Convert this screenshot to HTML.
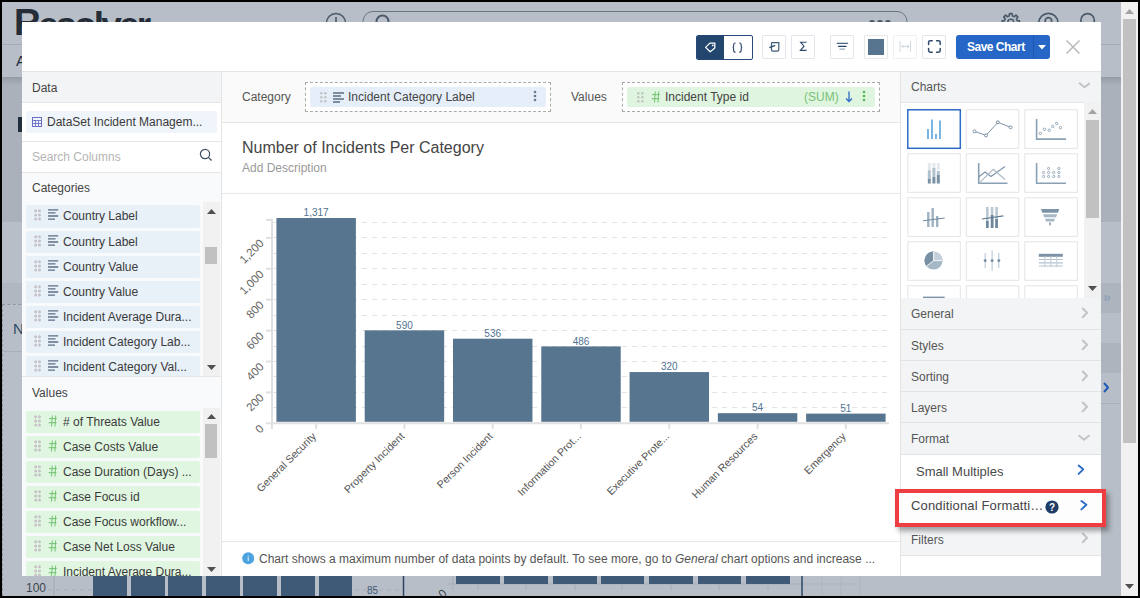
<!DOCTYPE html>
<html><head><meta charset="utf-8">
<style>
*{box-sizing:border-box;margin:0;padding:0}
html,body{width:1140px;height:598px;overflow:hidden;background:#000;font-family:"Liberation Sans",sans-serif}
.abs{position:absolute}
#page{position:absolute;left:2px;top:2px;width:1136px;height:594px;background:#b8bec7;overflow:hidden}
#modal{position:absolute;left:22px;top:22px;width:1079px;height:554px;background:#fff;overflow:hidden}
.t{position:absolute;white-space:nowrap;line-height:1}
.btn{position:absolute;top:13px;width:24px;height:24px;border:1px solid #e3e7ed;border-radius:1px;background:#fff}
.row{position:absolute;left:4px;width:174px;height:22px;border-radius:2px}
.cat{background:#e8f0f8}
.val{background:#e0f6e0}
.row .dots{position:absolute;left:7.9px;top:4.2px}
.row .ic{position:absolute;left:22px;top:4.3px}
.row .hash{position:absolute;left:22px;top:3.8px}
.row .tx{position:absolute;left:37px;top:5px;font-size:12px;color:#3a3a3a;white-space:nowrap;line-height:12px}
.tile{position:absolute;width:54px;height:40px;border:1px solid #e6e6e6;background:#fff}
.acc{position:absolute;left:0;width:200px;height:31px;background:#f3f4f6;border-bottom:1px solid #e3e3e3}
.acc .tx{position:absolute;left:10px;top:10px;font-size:12px;color:#555;line-height:12px}
.acc svg{position:absolute;left:179px;top:10px}
</style></head>
<body>
<div id="page">
  <!-- bands (page coords minus 2) -->
  <div class="abs" style="left:0;top:42px;width:1119px;height:1px;background:#a3aab3"></div>
  <div class="abs" style="left:0;top:75px;width:1119px;height:145px;background:#aab1ba"></div>
  <div class="abs" style="left:0;top:75px;width:1119px;height:8px;background:linear-gradient(#959ca5,#aab1ba)"></div>
  <div class="abs" style="left:0;top:281px;width:1119px;height:1px;background:#a8afb8"></div>
  <div class="abs" style="left:0;top:281px;width:30px;height:21px;background:#b0b7c0"></div>
  <div class="abs" style="left:0;top:302px;width:30px;height:0;border-top:1px dashed #8f969f"></div>
  <div class="abs" style="left:0px;top:302px;width:0;height:292px;border-left:1px dashed #8f969f"></div>
  <div class="abs" style="left:0;top:349px;width:30px;height:1px;background:#a8afb8"></div>
  <div class="abs" style="left:1099px;top:281px;width:20px;height:30px;background:#adb4bd"></div>
  <div class="abs" style="left:1099px;top:341px;width:20px;height:30px;background:#adb4bd"></div>
  <div class="abs" style="left:1099px;top:401px;width:20px;height:1px;background:#a8afb8"></div>
  <div class="t" style="left:1101px;top:288px;font-size:14px;color:#8fa3b8;font-weight:bold">&raquo;</div>
  <svg class="abs" style="left:1101px;top:380px" width="6" height="11"><path d="M1 1 L5 5.5 L1 10" fill="none" stroke="#1f5bb5" stroke-width="2"/></svg>
  <div class="t" style="left:14px;top:51px;font-size:15px;color:#1f2d3d">A</div>
  <div class="abs" style="left:16px;top:115px;width:4px;height:15px;background:#1f2d3d"></div>
  <div class="t" style="left:11px;top:319px;font-size:15px;color:#2a4a68">N</div>
  <div class="t" style="left:12px;top:2px;font-size:37px;font-weight:bold;color:#252d38;letter-spacing:-2.4px">R<span style="position:relative;top:3px;letter-spacing:-2.8px">esolver</span></div>
  <svg class="abs" style="left:0;top:0" width="1119" height="30"><g transform="translate(-2,-2)" fill="none" stroke="#4b5a6b">
    <circle cx="336" cy="23" r="9.5" stroke-width="1.6"/><path d="M336 17 V22" stroke-width="1.6"/>
    <path d="M363 24 V21 A10 10 0 0 1 373 11.5 H897 A10 10 0 0 1 907 21 V24" stroke-width="1" stroke="#6a7684"/>
    <circle cx="382.5" cy="21.5" r="6" stroke-width="2"/>
    <g fill="#4b5a6b" stroke="none"><ellipse cx="872" cy="21.5" rx="2.6" ry="1.4"/><ellipse cx="880" cy="21.5" rx="2.6" ry="1.4"/><ellipse cx="888" cy="21.5" rx="2.6" ry="1.4"/></g>
    <path d="M1009.42 13.61 L1012.18 13.61 L1012.34 15.88 L1014.25 16.67 L1015.97 15.18 L1017.92 17.13 L1016.43 18.85 L1017.22 20.76 L1019.49 20.92 L1019.49 23.68 L1017.22 23.84 L1016.43 25.75 L1017.92 27.47 L1015.97 29.42 L1014.25 27.93 L1012.34 28.72 L1012.18 30.99 L1009.42 30.99 L1009.26 28.72 L1007.35 27.93 L1005.63 29.42 L1003.68 27.47 L1005.17 25.75 L1004.38 23.84 L1002.11 23.68 L1002.11 20.92 L1004.38 20.76 L1005.17 18.85 L1003.68 17.13 L1005.63 15.18 L1007.35 16.67 L1009.26 15.88 Z" stroke-width="1.6" stroke-linejoin="round"/><circle cx="1010.8" cy="22.3" r="3" stroke-width="1.5"/>
    <circle cx="1048.4" cy="23" r="9.6" stroke-width="1.7"/><circle cx="1048.4" cy="21" r="3.3" stroke-width="1.7"/>
    <circle cx="1087.6" cy="20.5" r="6.8" stroke-width="1.7"/>
  </g></svg>
  <!-- bottom strip -->
  <svg class="abs" style="left:0;top:570px" width="1119" height="24"><g transform="translate(-2,-572)">
    <text x="26" y="592" font-size="12" fill="#3d4650" font-family="Liberation Sans">100</text>
    <path d="M54 572 V596" stroke="#a3aab3" stroke-width="1"/>
    <path d="M48 590 H92" stroke="#a6adb6" stroke-dasharray="4,4"/>
    <g fill="#3e5a76"><rect x="93" y="572" width="34" height="24"/><rect x="131" y="572" width="34" height="24"/><rect x="168" y="572" width="34" height="24"/><rect x="206" y="572" width="34" height="24"/><rect x="243" y="572" width="34" height="24"/><rect x="281" y="572" width="34" height="24"/><rect x="319" y="572" width="33" height="24"/></g>
    <path d="M355 590 H405" stroke="#a6adb6" stroke-dasharray="4,4"/>
    <text x="367" y="594" font-size="10" fill="#3e5a76" font-family="Liberation Sans">85</text>
    <path d="M403.5 572 V596" stroke="#2d4560" stroke-width="1.5"/>
    <text transform="translate(447.5,594) rotate(-45)" text-anchor="end" font-size="11.5" fill="#3d4650" font-family="Liberation Sans">0</text>
    <path d="M448 584 H802 M453 576 V590" stroke="#a6adb6" stroke-width="1"/>
    <g fill="#3e5a76"><rect x="456" y="572" width="44" height="12"/><rect x="504" y="572" width="44" height="12"/><rect x="553" y="572" width="44" height="12"/><rect x="601" y="572" width="43" height="12"/><rect x="649" y="572" width="44" height="12"/><rect x="698" y="572" width="43" height="12"/><rect x="746" y="572" width="44" height="12"/></g>
    <path d="M478 584 V590 M526 584 V590 M575 584 V590 M622 584 V590 M671 584 V590 M719 584 V590 M768 584 V590" stroke="#a6adb6"/>
    <path d="M802 572 V596" stroke="#2d4560" stroke-width="1.5"/>
    <path d="M803 584 H860 M822 572 V596 M841 572 V596 M860 572 V596" stroke="#aeb5be" stroke-width="1"/>
  </g></svg>
  <!-- scrollbar -->
  <div class="abs" style="left:1119px;top:0;width:17px;height:594px;background:#f1f1f1"></div>
  <svg class="abs" style="left:1123px;top:7px" width="9" height="5"><path d="M0 5 L4.5 0 L9 5 Z" fill="#a3a3a3"/></svg>
  <div class="abs" style="left:1121px;top:17px;width:13px;height:424px;background:#c1c1c1"></div>
  <svg class="abs" style="left:1123px;top:582px" width="9" height="5"><path d="M0 0 L4.5 5 L9 0 Z" fill="#505050"/></svg>
</div>
<div id="modal">
  <!-- header -->
  <div class="abs" style="left:0;top:0;width:1079px;height:49px;background:#fff"></div>
  <div class="abs" style="left:674px;top:13px;width:57px;height:25px;border:1px solid #26497a;border-radius:2px;overflow:hidden;background:#fff">
    <div class="abs" style="left:0;top:0;width:27px;height:23px;background:#23466f"></div>
  </div>
  <div class="btn" style="left:740px"></div>
  <div class="btn" style="left:769px"></div>
  <div class="btn" style="left:808px"></div>
  <div class="btn" style="left:842px;border-color:#e8e8e8"><div class="abs" style="left:3px;top:3px;width:16px;height:16px;background:#587590"></div></div>
  <div class="btn" style="left:871px;border-color:#eef0f3"></div>
  <div class="btn" style="left:900px"></div>
  <svg class="abs" style="left:0;top:0" width="1079" height="49"><g transform="translate(-22,-22)" fill="none">
    <path d="M705.6 47.4 L709.9 43.1 H714.8 V48.1 L710.2 51.8 Z" stroke="#fff" stroke-width="1.3" stroke-linejoin="round"/>
    <rect x="711.9" y="44.6" width="1.6" height="1.6" fill="#fff"/>
    <path d="M735.6 43 Q733.6 43 733.6 45 V46.6 Q733.6 47.5 732.6 47.5 Q733.6 47.5 733.6 48.4 V50.2 Q733.6 52.2 735.6 52.2" stroke="#2d4a6a" stroke-width="1.1"/>
    <path d="M739.2 43 Q741.2 43 741.2 45 V46.6 Q741.2 47.5 742.2 47.5 Q741.2 47.5 741.2 48.4 V50.2 Q741.2 52.2 739.2 52.2" stroke="#2d4a6a" stroke-width="1.1"/>
    <path d="M771.5 42.6 H778.8 V49.6 Q778.8 51.2 777.2 51.2 H773 Q771.5 51.2 771.5 49.6 V42.6" stroke="#3d5a78" stroke-width="1.2"/>
    <path d="M769.4 47.6 L775.2 45.4" stroke="#2d4a6a" stroke-width="1.3"/>
    <path d="M806.5 42.2 H800.6 L804 46.2 L800.4 50.4 H806.6" stroke="#2d4a6a" stroke-width="1.1" stroke-linejoin="miter"/>
    <path d="M837.2 43.4 H847.6" stroke="#4a6584" stroke-width="1.3" stroke-linecap="round"/>
    <path d="M838.6 46.4 H846" stroke="#23446a" stroke-width="1.3" stroke-linecap="round"/>
    <path d="M840 49.2 H844.5" stroke="#9aabbb" stroke-width="1.3" stroke-linecap="round"/>
    <path d="M900 41 V51.7 M910.5 41 V51.7" stroke="#d3dae3" stroke-width="1.1"/>
    <path d="M901.8 46.4 H909 M903.4 45 L901.8 46.4 L903.4 47.8 M907.4 45 L909 46.4 L907.4 47.8" stroke="#c3ccd6" stroke-width="0.9"/>
    <path d="M928.6 44.6 V42.4 Q928.6 40.8 930.2 40.8 H932.2 M936.6 40.8 H938.6 Q940.2 40.8 940.2 42.4 V44.6 M940.2 48.6 V50.6 Q940.2 52.2 938.6 52.2 H936.6 M932.2 52.2 H930.2 Q928.6 52.2 928.6 50.6 V48.6" stroke="#2d4a6a" stroke-width="1.5" stroke-linecap="round"/>
  </g></svg>
  <div class="abs" style="left:934px;top:13px;width:94px;height:24px;background:#2566c7;border-radius:3px">
    <div class="t" style="left:11px;top:6px;font-size:12px;font-weight:bold;color:#fff;letter-spacing:-0.5px">Save Chart</div>
    <div class="abs" style="left:77px;top:0;width:1px;height:24px;background:#1f58ae"></div>
    <svg class="abs" style="left:82px;top:10px" width="8" height="5" viewBox="0 0 8 5"><path d="M0 0 H8 L4 4.5 Z" fill="#fff"/></svg>
  </div>
  <svg class="abs" style="left:1044px;top:18px" width="14" height="14" viewBox="0 0 14 14"><path d="M0.5 0.5 L13.5 13.5 M13.5 0.5 L0.5 13.5" stroke="#b9b9b9" stroke-width="1.5"/></svg>

  <!-- left panel -->
  <div class="abs" style="left:0;top:49px;width:200px;height:505px;border-right:1px solid #e3e3e3;background:#fff">
    <div class="abs" style="left:0;top:1px;width:199px;height:31px;background:#f3f4f6;border-bottom:1px solid #e6e6e6"></div>
    <div class="t" style="left:10px;top:10.5px;font-size:12px;color:#444">Data</div>
    <div class="abs" style="left:4px;top:40px;width:191px;height:22px;background:#eff5fb;border-radius:2px"></div>
    <svg class="abs" style="left:10px;top:46px" width="10" height="10" viewBox="0 0 10 10"><rect x="0.5" y="0.5" width="9" height="9" fill="none" stroke="#6b6fc9" stroke-width="1"/><path d="M0.5 3.5 H9.5 M0.5 6.5 H9.5 M3.5 3.5 V9.5 M6.5 3.5 V9.5" stroke="#6b6fc9" stroke-width="0.9"/></svg>
    <div class="t" style="left:25px;top:45px;font-size:12px;color:#3a3a3a">DataSet Incident Managem...</div>
    <div class="abs" style="left:0;top:70px;width:199px;height:1px;background:#e6e6e6"></div>
    <div class="t" style="left:10px;top:80px;font-size:12px;color:#b5b5b5">Search Columns</div>
    <svg class="abs" style="left:177px;top:77px" width="14" height="14" viewBox="0 0 14 14"><circle cx="6" cy="6" r="4.6" fill="none" stroke="#3d4f63" stroke-width="1.2"/><path d="M9.4 9.4 L12.5 12.5" stroke="#3d4f63" stroke-width="1.3"/></svg>
    <div class="abs" style="left:0;top:101px;width:199px;height:1px;background:#e6e6e6"></div>
    <div class="abs" style="left:0;top:102px;width:199px;height:203px;background:#f9fafc"></div>
    <div class="t" style="left:10px;top:111px;font-size:12px;color:#444">Categories</div>
    <div id="catlist" class="abs" style="left:0;top:131px;width:199px;height:174px;overflow:hidden">
      <div class="row cat" style="top:3px;height:23px"><svg class="dots" width="8" height="12"><g fill="#c6c2c8"><circle cx="1.7" cy="1.7" r="1.5"/><circle cx="5.5" cy="1.7" r="1.5"/><circle cx="1.7" cy="5.9" r="1.5"/><circle cx="5.5" cy="5.9" r="1.5"/><circle cx="1.7" cy="10.1" r="1.5"/><circle cx="5.5" cy="10.1" r="1.5"/></g></svg><svg class="ic" width="11" height="11"><path d="M0 0.8 H10.2 M0 3.9 H7.5 M0 7 H10.2 M0 10.1 H7" stroke="#5c6f84" stroke-width="1.3"/></svg><div class="tx">Country Label</div></div>
      <div class="row cat" style="top:29px"><svg class="dots" width="8" height="12"><g fill="#c6c2c8"><circle cx="1.7" cy="1.7" r="1.5"/><circle cx="5.5" cy="1.7" r="1.5"/><circle cx="1.7" cy="5.9" r="1.5"/><circle cx="5.5" cy="5.9" r="1.5"/><circle cx="1.7" cy="10.1" r="1.5"/><circle cx="5.5" cy="10.1" r="1.5"/></g></svg><svg class="ic" width="11" height="11"><path d="M0 0.8 H10.2 M0 3.9 H7.5 M0 7 H10.2 M0 10.1 H7" stroke="#5c6f84" stroke-width="1.3"/></svg><div class="tx">Country Label</div></div>
      <div class="row cat" style="top:54px"><svg class="dots" width="8" height="12"><g fill="#c6c2c8"><circle cx="1.7" cy="1.7" r="1.5"/><circle cx="5.5" cy="1.7" r="1.5"/><circle cx="1.7" cy="5.9" r="1.5"/><circle cx="5.5" cy="5.9" r="1.5"/><circle cx="1.7" cy="10.1" r="1.5"/><circle cx="5.5" cy="10.1" r="1.5"/></g></svg><svg class="ic" width="11" height="11"><path d="M0 0.8 H10.2 M0 3.9 H7.5 M0 7 H10.2 M0 10.1 H7" stroke="#5c6f84" stroke-width="1.3"/></svg><div class="tx">Country Value</div></div>
      <div class="row cat" style="top:79px"><svg class="dots" width="8" height="12"><g fill="#c6c2c8"><circle cx="1.7" cy="1.7" r="1.5"/><circle cx="5.5" cy="1.7" r="1.5"/><circle cx="1.7" cy="5.9" r="1.5"/><circle cx="5.5" cy="5.9" r="1.5"/><circle cx="1.7" cy="10.1" r="1.5"/><circle cx="5.5" cy="10.1" r="1.5"/></g></svg><svg class="ic" width="11" height="11"><path d="M0 0.8 H10.2 M0 3.9 H7.5 M0 7 H10.2 M0 10.1 H7" stroke="#5c6f84" stroke-width="1.3"/></svg><div class="tx">Country Value</div></div>
      <div class="row cat" style="top:104px"><svg class="dots" width="8" height="12"><g fill="#c6c2c8"><circle cx="1.7" cy="1.7" r="1.5"/><circle cx="5.5" cy="1.7" r="1.5"/><circle cx="1.7" cy="5.9" r="1.5"/><circle cx="5.5" cy="5.9" r="1.5"/><circle cx="1.7" cy="10.1" r="1.5"/><circle cx="5.5" cy="10.1" r="1.5"/></g></svg><svg class="ic" width="11" height="11"><path d="M0 0.8 H10.2 M0 3.9 H7.5 M0 7 H10.2 M0 10.1 H7" stroke="#5c6f84" stroke-width="1.3"/></svg><div class="tx">Incident Average Dura...</div></div>
      <div class="row cat" style="top:129px"><svg class="dots" width="8" height="12"><g fill="#c6c2c8"><circle cx="1.7" cy="1.7" r="1.5"/><circle cx="5.5" cy="1.7" r="1.5"/><circle cx="1.7" cy="5.9" r="1.5"/><circle cx="5.5" cy="5.9" r="1.5"/><circle cx="1.7" cy="10.1" r="1.5"/><circle cx="5.5" cy="10.1" r="1.5"/></g></svg><svg class="ic" width="11" height="11"><path d="M0 0.8 H10.2 M0 3.9 H7.5 M0 7 H10.2 M0 10.1 H7" stroke="#5c6f84" stroke-width="1.3"/></svg><div class="tx">Incident Category Lab...</div></div>
      <div class="row cat" style="top:154px"><svg class="dots" width="8" height="12"><g fill="#c6c2c8"><circle cx="1.7" cy="1.7" r="1.5"/><circle cx="5.5" cy="1.7" r="1.5"/><circle cx="1.7" cy="5.9" r="1.5"/><circle cx="5.5" cy="5.9" r="1.5"/><circle cx="1.7" cy="10.1" r="1.5"/><circle cx="5.5" cy="10.1" r="1.5"/></g></svg><svg class="ic" width="11" height="11"><path d="M0 0.8 H10.2 M0 3.9 H7.5 M0 7 H10.2 M0 10.1 H7" stroke="#5c6f84" stroke-width="1.3"/></svg><div class="tx">Incident Category Val...</div></div>
      <!-- scrollbar -->
      <div class="abs" style="left:181px;top:0;width:17px;height:174px;background:#f1f1f1"></div>
      <svg class="abs" style="left:185px;top:7px" width="9" height="5"><path d="M0 5 L4.5 0 L9 5 Z" fill="#505050"/></svg>
      <div class="abs" style="left:183px;top:44.5px;width:12px;height:17px;background:#c1c1c1"></div>
      <svg class="abs" style="left:185px;top:163px" width="9" height="5"><path d="M0 0 L4.5 5 L9 0 Z" fill="#505050"/></svg>
    </div>
    <div class="abs" style="left:0;top:305px;width:199px;height:1px;background:#e6e6e6"></div>
    <div class="abs" style="left:0;top:306px;width:199px;height:199px;background:#f9fafc"></div>
    <div class="t" style="left:10px;top:316px;font-size:12px;color:#444">Values</div>
    <div id="vallist" class="abs" style="left:0;top:337px;width:199px;height:168px;overflow:hidden">
      <div class="row val" style="top:3px"><svg class="dots" width="8" height="12"><g fill="#c6c2c8"><circle cx="1.7" cy="1.7" r="1.5"/><circle cx="5.5" cy="1.7" r="1.5"/><circle cx="1.7" cy="5.9" r="1.5"/><circle cx="5.5" cy="5.9" r="1.5"/><circle cx="1.7" cy="10.1" r="1.5"/><circle cx="5.5" cy="10.1" r="1.5"/></g></svg><svg class="hash" width="9" height="12"><path d="M3.5 11.5 L4.3 0.5 M6.9 11.5 L7.7 0.5 M1 3.6 H8.8 M0.6 7.7 H8.4" stroke="#6cc06c" stroke-width="0.95"/></svg><div class="tx"># of Threats Value</div></div>
      <div class="row val" style="top:28px"><svg class="dots" width="8" height="12"><g fill="#c6c2c8"><circle cx="1.7" cy="1.7" r="1.5"/><circle cx="5.5" cy="1.7" r="1.5"/><circle cx="1.7" cy="5.9" r="1.5"/><circle cx="5.5" cy="5.9" r="1.5"/><circle cx="1.7" cy="10.1" r="1.5"/><circle cx="5.5" cy="10.1" r="1.5"/></g></svg><svg class="hash" width="9" height="12"><path d="M3.5 11.5 L4.3 0.5 M6.9 11.5 L7.7 0.5 M1 3.6 H8.8 M0.6 7.7 H8.4" stroke="#6cc06c" stroke-width="0.95"/></svg><div class="tx">Case Costs Value</div></div>
      <div class="row val" style="top:53px"><svg class="dots" width="8" height="12"><g fill="#c6c2c8"><circle cx="1.7" cy="1.7" r="1.5"/><circle cx="5.5" cy="1.7" r="1.5"/><circle cx="1.7" cy="5.9" r="1.5"/><circle cx="5.5" cy="5.9" r="1.5"/><circle cx="1.7" cy="10.1" r="1.5"/><circle cx="5.5" cy="10.1" r="1.5"/></g></svg><svg class="hash" width="9" height="12"><path d="M3.5 11.5 L4.3 0.5 M6.9 11.5 L7.7 0.5 M1 3.6 H8.8 M0.6 7.7 H8.4" stroke="#6cc06c" stroke-width="0.95"/></svg><div class="tx">Case Duration (Days) ...</div></div>
      <div class="row val" style="top:78px"><svg class="dots" width="8" height="12"><g fill="#c6c2c8"><circle cx="1.7" cy="1.7" r="1.5"/><circle cx="5.5" cy="1.7" r="1.5"/><circle cx="1.7" cy="5.9" r="1.5"/><circle cx="5.5" cy="5.9" r="1.5"/><circle cx="1.7" cy="10.1" r="1.5"/><circle cx="5.5" cy="10.1" r="1.5"/></g></svg><svg class="hash" width="9" height="12"><path d="M3.5 11.5 L4.3 0.5 M6.9 11.5 L7.7 0.5 M1 3.6 H8.8 M0.6 7.7 H8.4" stroke="#6cc06c" stroke-width="0.95"/></svg><div class="tx">Case Focus id</div></div>
      <div class="row val" style="top:103px"><svg class="dots" width="8" height="12"><g fill="#c6c2c8"><circle cx="1.7" cy="1.7" r="1.5"/><circle cx="5.5" cy="1.7" r="1.5"/><circle cx="1.7" cy="5.9" r="1.5"/><circle cx="5.5" cy="5.9" r="1.5"/><circle cx="1.7" cy="10.1" r="1.5"/><circle cx="5.5" cy="10.1" r="1.5"/></g></svg><svg class="hash" width="9" height="12"><path d="M3.5 11.5 L4.3 0.5 M6.9 11.5 L7.7 0.5 M1 3.6 H8.8 M0.6 7.7 H8.4" stroke="#6cc06c" stroke-width="0.95"/></svg><div class="tx">Case Focus workflow...</div></div>
      <div class="row val" style="top:128px"><svg class="dots" width="8" height="12"><g fill="#c6c2c8"><circle cx="1.7" cy="1.7" r="1.5"/><circle cx="5.5" cy="1.7" r="1.5"/><circle cx="1.7" cy="5.9" r="1.5"/><circle cx="5.5" cy="5.9" r="1.5"/><circle cx="1.7" cy="10.1" r="1.5"/><circle cx="5.5" cy="10.1" r="1.5"/></g></svg><svg class="hash" width="9" height="12"><path d="M3.5 11.5 L4.3 0.5 M6.9 11.5 L7.7 0.5 M1 3.6 H8.8 M0.6 7.7 H8.4" stroke="#6cc06c" stroke-width="0.95"/></svg><div class="tx">Case Net Loss Value</div></div>
      <div class="row val" style="top:153px"><svg class="dots" width="8" height="12"><g fill="#c6c2c8"><circle cx="1.7" cy="1.7" r="1.5"/><circle cx="5.5" cy="1.7" r="1.5"/><circle cx="1.7" cy="5.9" r="1.5"/><circle cx="5.5" cy="5.9" r="1.5"/><circle cx="1.7" cy="10.1" r="1.5"/><circle cx="5.5" cy="10.1" r="1.5"/></g></svg><svg class="hash" width="9" height="12"><path d="M3.5 11.5 L4.3 0.5 M6.9 11.5 L7.7 0.5 M1 3.6 H8.8 M0.6 7.7 H8.4" stroke="#6cc06c" stroke-width="0.95"/></svg><div class="tx">Incident Average Dura...</div></div>
      <div class="abs" style="left:181px;top:0;width:17px;height:168px;background:#f1f1f1"></div>
      <svg class="abs" style="left:185px;top:6px" width="9" height="5"><path d="M0 5 L4.5 0 L9 5 Z" fill="#505050"/></svg>
      <div class="abs" style="left:183px;top:16px;width:12px;height:34px;background:#c1c1c1"></div>
      <svg class="abs" style="left:185px;top:159px" width="9" height="5"><path d="M0 0 L4.5 5 L9 0 Z" fill="#505050"/></svg>
    </div>
  </div>

  <!-- center -->
  <div class="abs" style="left:200px;top:49px;width:678px;height:505px;background:#fff">
    <div class="abs" style="left:0;top:1px;width:678px;height:51px;background:#fafafa;border-bottom:1px solid #e6e6e6"></div>
    <div class="t" style="left:20px;top:20px;font-size:12px;color:#555">Category</div>
    <div class="abs" style="left:83px;top:11px;width:246px;height:30px;border:1px dashed #aaa;background:#fff"></div>
    <div class="abs" style="left:88px;top:16px;width:236px;height:20px;background:#e6eff9;border-radius:2px"></div>
    <svg class="abs" style="left:98px;top:21px" width="7" height="11"><g fill="#c4c4c4"><circle cx="1.3" cy="1.3" r="1.3"/><circle cx="5.3" cy="1.3" r="1.3"/><circle cx="1.3" cy="5.3" r="1.3"/><circle cx="5.3" cy="5.3" r="1.3"/><circle cx="1.3" cy="9.3" r="1.3"/><circle cx="5.3" cy="9.3" r="1.3"/></g></svg>
    <svg class="abs" style="left:111px;top:21px" width="11" height="11"><path d="M0 1 H11 M0 4 H8 M0 7 H11 M0 10 H7" stroke="#5c6f84" stroke-width="1.4"/></svg>
    <div class="t" style="left:126px;top:20px;font-size:12px;color:#444">Incident Category Label</div>
    <svg class="abs" style="left:311px;top:19px" width="4" height="13"><g fill="#6a7a8c"><circle cx="2" cy="2" r="1.3"/><circle cx="2" cy="6" r="1.3"/><circle cx="2" cy="10" r="1.3"/></g></svg>
    <div class="t" style="left:349px;top:20px;font-size:12px;color:#555">Values</div>
    <div class="abs" style="left:400px;top:11px;width:258px;height:30px;border:1px dashed #aaa;background:#fff"></div>
    <div class="abs" style="left:405px;top:16px;width:248px;height:20px;background:#dff5df;border-radius:2px"></div>
    <svg class="abs" style="left:415px;top:21px" width="7" height="11"><g fill="#c4c4c4"><circle cx="1.3" cy="1.3" r="1.3"/><circle cx="5.3" cy="1.3" r="1.3"/><circle cx="1.3" cy="5.3" r="1.3"/><circle cx="5.3" cy="5.3" r="1.3"/><circle cx="1.3" cy="9.3" r="1.3"/><circle cx="5.3" cy="9.3" r="1.3"/></g></svg>
    <svg class="abs" style="left:428.5px;top:20px" width="9" height="12"><path d="M3.5 11.5 L4.3 0.5 M6.9 11.5 L7.7 0.5 M1 3.6 H8.8 M0.6 7.7 H8.4" stroke="#6cc06c" stroke-width="0.95"/></svg>
    <div class="t" style="left:443px;top:20px;font-size:12px;color:#444">Incident Type id</div>
    <div class="t" style="left:582px;top:20px;font-size:12px;color:#77c277">(SUM)</div>
    <svg class="abs" style="left:623px;top:20px" width="8" height="12"><path d="M4 0.5 V10.5 M1 7.5 L4 10.5 L7 7.5" fill="none" stroke="#2d6bc6" stroke-width="1.3"/></svg>
    <svg class="abs" style="left:640px;top:19px" width="4" height="13"><g fill="#5cb65c"><circle cx="2" cy="2" r="1.3"/><circle cx="2" cy="6" r="1.3"/><circle cx="2" cy="10" r="1.3"/></g></svg>
    <div class="t" style="left:20px;top:69px;font-size:16px;color:#444">Number of Incidents Per Category</div>
    <div class="t" style="left:20px;top:91px;font-size:12px;color:#999">Add Description</div>
    <div class="abs" style="left:0;top:122px;width:678px;height:1px;background:#e8e8e8"></div>
    <div class="abs" style="left:0;top:470px;width:678px;height:1px;background:#e8e8e8"></div>
    <svg class="abs" style="left:20px;top:480.7px" width="13" height="13"><circle cx="6.2" cy="6.2" r="6" fill="#4da3e0"/><rect x="5.7" y="5.4" width="1.1" height="3.6" fill="#d8ecfa"/><rect x="5.7" y="3.6" width="1.1" height="1.1" fill="#d8ecfa"/></svg>
    <div class="t" style="left:37px;top:482px;font-size:12px;color:#555">Chart shows a maximum number of data points by default. To see more, go to <i>General</i> chart options and increase ...</div>
  </div>
  <svg class="abs" style="left:0;top:0" width="1079" height="554"><g transform="translate(-22,-22)" font-family="Liberation Sans">
<line x1="272" y1="407.50" x2="890" y2="407.50" stroke="#e3e3e3" stroke-width="1" stroke-dasharray="5,5"/>
<line x1="272" y1="392.50" x2="890" y2="392.50" stroke="#e3e3e3" stroke-width="1" stroke-dasharray="5,5"/>
<line x1="272" y1="376.50" x2="890" y2="376.50" stroke="#e3e3e3" stroke-width="1" stroke-dasharray="5,5"/>
<line x1="272" y1="361.50" x2="890" y2="361.50" stroke="#e3e3e3" stroke-width="1" stroke-dasharray="5,5"/>
<line x1="272" y1="346.50" x2="890" y2="346.50" stroke="#e3e3e3" stroke-width="1" stroke-dasharray="5,5"/>
<line x1="272" y1="330.50" x2="890" y2="330.50" stroke="#e3e3e3" stroke-width="1" stroke-dasharray="5,5"/>
<line x1="272" y1="315.50" x2="890" y2="315.50" stroke="#e3e3e3" stroke-width="1" stroke-dasharray="5,5"/>
<line x1="272" y1="299.50" x2="890" y2="299.50" stroke="#e3e3e3" stroke-width="1" stroke-dasharray="5,5"/>
<line x1="272" y1="284.50" x2="890" y2="284.50" stroke="#e3e3e3" stroke-width="1" stroke-dasharray="5,5"/>
<line x1="272" y1="268.50" x2="890" y2="268.50" stroke="#e3e3e3" stroke-width="1" stroke-dasharray="5,5"/>
<line x1="272" y1="253.50" x2="890" y2="253.50" stroke="#e3e3e3" stroke-width="1" stroke-dasharray="5,5"/>
<line x1="272" y1="237.50" x2="890" y2="237.50" stroke="#e3e3e3" stroke-width="1" stroke-dasharray="5,5"/>
<line x1="272" y1="222.50" x2="890" y2="222.50" stroke="#e3e3e3" stroke-width="1" stroke-dasharray="5,5"/>
<line x1="272" y1="219.32" x2="272" y2="429" stroke="#e0e0e0" stroke-width="2"/>
<line x1="271" y1="423.30" x2="889" y2="423.30" stroke="#e0e0e0" stroke-width="2"/>
<line x1="266" y1="423.30" x2="272" y2="423.30" stroke="#e0e0e0" stroke-width="2"/>
<line x1="266" y1="392.40" x2="272" y2="392.40" stroke="#e0e0e0" stroke-width="2"/>
<line x1="266" y1="361.50" x2="272" y2="361.50" stroke="#e0e0e0" stroke-width="2"/>
<line x1="266" y1="330.60" x2="272" y2="330.60" stroke="#e0e0e0" stroke-width="2"/>
<line x1="266" y1="299.70" x2="272" y2="299.70" stroke="#e0e0e0" stroke-width="2"/>
<line x1="266" y1="268.80" x2="272" y2="268.80" stroke="#e0e0e0" stroke-width="2"/>
<line x1="266" y1="237.90" x2="272" y2="237.90" stroke="#e0e0e0" stroke-width="2"/>
<line x1="266" y1="219.82" x2="272" y2="219.82" stroke="#e0e0e0" stroke-width="2"/>
<text transform="translate(264.5,429.40) rotate(-45)" text-anchor="end" font-size="11.5" fill="#666">0</text>
<text transform="translate(264.5,398.50) rotate(-45)" text-anchor="end" font-size="11.5" fill="#666">200</text>
<text transform="translate(264.5,367.60) rotate(-45)" text-anchor="end" font-size="11.5" fill="#666">400</text>
<text transform="translate(264.5,336.70) rotate(-45)" text-anchor="end" font-size="11.5" fill="#666">600</text>
<text transform="translate(264.5,305.80) rotate(-45)" text-anchor="end" font-size="11.5" fill="#666">800</text>
<text transform="translate(264.5,274.90) rotate(-45)" text-anchor="end" font-size="11.5" fill="#666">1,000</text>
<text transform="translate(264.5,244.00) rotate(-45)" text-anchor="end" font-size="11.5" fill="#666">1,200</text>
<rect x="276.41" y="218.02" width="79.46" height="203.78" fill="#587590"/>
<text x="316.14" y="216.32" text-anchor="middle" font-size="10" fill="#4f7291">1,317</text>
<line x1="316.14" y1="423.30" x2="316.14" y2="429" stroke="#e0e0e0" stroke-width="2"/>
<text transform="translate(316.74,437) rotate(-45)" text-anchor="end" font-size="10.6" fill="#555">General Security</text>
<rect x="364.70" y="330.34" width="79.46" height="91.46" fill="#587590"/>
<text x="404.43" y="328.64" text-anchor="middle" font-size="10" fill="#4f7291">590</text>
<line x1="404.43" y1="423.30" x2="404.43" y2="429" stroke="#e0e0e0" stroke-width="2"/>
<text transform="translate(405.03,437) rotate(-45)" text-anchor="end" font-size="10.6" fill="#555">Property Incident</text>
<rect x="452.99" y="338.69" width="79.46" height="83.11" fill="#587590"/>
<text x="492.71" y="336.99" text-anchor="middle" font-size="10" fill="#4f7291">536</text>
<line x1="492.71" y1="423.30" x2="492.71" y2="429" stroke="#e0e0e0" stroke-width="2"/>
<text transform="translate(493.31,437) rotate(-45)" text-anchor="end" font-size="10.6" fill="#555">Person Incident</text>
<rect x="541.27" y="346.41" width="79.46" height="75.39" fill="#587590"/>
<text x="581.00" y="344.71" text-anchor="middle" font-size="10" fill="#4f7291">486</text>
<line x1="581.00" y1="423.30" x2="581.00" y2="429" stroke="#e0e0e0" stroke-width="2"/>
<text transform="translate(581.60,437) rotate(-45)" text-anchor="end" font-size="10.6" fill="#555">Information Prot...</text>
<rect x="629.56" y="372.06" width="79.46" height="49.74" fill="#587590"/>
<text x="669.29" y="370.36" text-anchor="middle" font-size="10" fill="#4f7291">320</text>
<line x1="669.29" y1="423.30" x2="669.29" y2="429" stroke="#e0e0e0" stroke-width="2"/>
<text transform="translate(669.89,437) rotate(-45)" text-anchor="end" font-size="10.6" fill="#555">Executive Prote...</text>
<rect x="717.84" y="413.16" width="79.46" height="8.64" fill="#587590"/>
<text x="757.57" y="411.46" text-anchor="middle" font-size="10" fill="#4f7291">54</text>
<line x1="757.57" y1="423.30" x2="757.57" y2="429" stroke="#e0e0e0" stroke-width="2"/>
<text transform="translate(758.17,437) rotate(-45)" text-anchor="end" font-size="10.6" fill="#555">Human Resources</text>
<rect x="806.13" y="413.62" width="79.46" height="8.18" fill="#587590"/>
<text x="845.86" y="411.92" text-anchor="middle" font-size="10" fill="#4f7291">51</text>
<line x1="845.86" y1="423.30" x2="845.86" y2="429" stroke="#e0e0e0" stroke-width="2"/>
<text transform="translate(846.46,437) rotate(-45)" text-anchor="end" font-size="10.6" fill="#555">Emergency</text>
  </g></svg>
  <!-- right -->
  <div class="abs" style="left:878px;top:49px;width:201px;height:505px;border-left:1px solid #e3e3e3;background:#fff">
    <div class="abs" style="left:0;top:1px;width:200px;height:31px;background:#f3f4f6;border-bottom:1px solid #e6e6e6"></div>
    <div class="t" style="left:10px;top:10.3px;font-size:12px;color:#555">Charts</div>
    <svg class="abs" style="left:176px;top:10px" width="13" height="8"><path d="M2.6 2.3 L7.5 6.2 L12.8 2.3" fill="none" stroke="#c4c4c4" stroke-width="2" stroke-linecap="round" stroke-linejoin="round"/></svg>
    <div class="abs" style="left:0;top:31px;width:200px;height:196px;overflow:hidden">
      <svg class="abs" style="left:0;top:0" width="200" height="196"><g transform="translate(-901,-102)">
<rect x="907.8" y="109.8" width="52.5" height="38.5" fill="#fff" stroke="#2d6bc6" stroke-width="1.5"/>
<rect x="966.3" y="109.8" width="52.5" height="38.5" fill="#fff" stroke="#e4e4e4" stroke-width="1"/>
<rect x="1024.8" y="109.8" width="52.5" height="38.5" fill="#fff" stroke="#e4e4e4" stroke-width="1"/>
<rect x="907.8" y="153.8" width="52.5" height="38.5" fill="#fff" stroke="#e4e4e4" stroke-width="1"/>
<rect x="966.3" y="153.8" width="52.5" height="38.5" fill="#fff" stroke="#e4e4e4" stroke-width="1"/>
<rect x="1024.8" y="153.8" width="52.5" height="38.5" fill="#fff" stroke="#e4e4e4" stroke-width="1"/>
<rect x="907.8" y="197.8" width="52.5" height="38.5" fill="#fff" stroke="#e4e4e4" stroke-width="1"/>
<rect x="966.3" y="197.8" width="52.5" height="38.5" fill="#fff" stroke="#e4e4e4" stroke-width="1"/>
<rect x="1024.8" y="197.8" width="52.5" height="38.5" fill="#fff" stroke="#e4e4e4" stroke-width="1"/>
<rect x="907.8" y="241.8" width="52.5" height="38.5" fill="#fff" stroke="#e4e4e4" stroke-width="1"/>
<rect x="966.3" y="241.8" width="52.5" height="38.5" fill="#fff" stroke="#e4e4e4" stroke-width="1"/>
<rect x="1024.8" y="241.8" width="52.5" height="38.5" fill="#fff" stroke="#e4e4e4" stroke-width="1"/>
<rect x="907.8" y="285.8" width="52.5" height="38.5" fill="#fff" stroke="#e4e4e4" stroke-width="1"/>
<rect x="966.3" y="285.8" width="52.5" height="38.5" fill="#fff" stroke="#e4e4e4" stroke-width="1"/>
<rect x="1024.8" y="285.8" width="52.5" height="38.5" fill="#fff" stroke="#e4e4e4" stroke-width="1"/>

<g stroke="#6aaee0" stroke-width="1.8"><path d="M928 129 V139 M932 119.5 V139 M936 134 V139 M940 120.5 V139"/></g>
<g fill="none" stroke="#7d93a8" stroke-width="1"><path d="M974.5 131.4 L986 135.4 L997.9 122.3 L1010.6 127.3"/><g fill="#fff"><circle cx="974.5" cy="131.4" r="1.5"/><circle cx="986" cy="135.4" r="1.5"/><circle cx="997.9" cy="122.3" r="1.5"/><circle cx="1010.6" cy="127.3" r="1.5"/></g></g>
<g fill="none" stroke="#8aa0b3"><path d="M1036.6 119 V139.1 H1066" stroke-width="1.6"/><g stroke-width="0.9"><circle cx="1040.4" cy="133.4" r="1.2"/><circle cx="1044.4" cy="129.3" r="1.2"/><circle cx="1049.3" cy="130.3" r="1.2"/><circle cx="1052.7" cy="126.5" r="1.2"/><circle cx="1056.7" cy="123.4" r="1.2"/><circle cx="1060.5" cy="127.6" r="1.2"/></g></g>
<g stroke-width="3"><path d="M929.3 163 V170.2 M933.9 163 V170.2 M938.3 163 V170.2" stroke="#e3e8ed"/><path d="M929.3 170.2 V178.7 M933.9 168 V177 M938.3 171 V175" stroke="#b0c0cd"/><path d="M929.3 178.7 V183.6 M933.9 177 V183.6 M938.3 175 V183.6" stroke="#7890a4"/></g>
<g fill="none" stroke-width="1.1"><path d="M978.7 163 V183.3 H1007.5" stroke="#8aa0b3" stroke-width="1.6"/><path d="M978.7 177 L985 172 L991 176.5 L1005 166.5" stroke="#7d93a8"/><path d="M978.7 183.3 L993.3 169.3 L1005 179.5" stroke="#a9b8c6"/></g>
<g fill="none" stroke="#8aa0b3"><path d="M1036.6 163 V183.3 H1066" stroke-width="1.6"/><g stroke-width="0.9"><circle cx="1043.5" cy="176.5" r="1.1"/><circle cx="1048.6" cy="176.5" r="1.1"/><circle cx="1053.7" cy="176.5" r="1.1"/><circle cx="1058.8" cy="176.5" r="1.1"/><circle cx="1043.5" cy="172.5" r="1.1"/><circle cx="1048.6" cy="172.5" r="1.1"/><circle cx="1053.7" cy="172.5" r="1.1"/><circle cx="1058.8" cy="172.5" r="1.1"/><circle cx="1048.6" cy="168.5" r="1.1"/><circle cx="1058.8" cy="168.5" r="1.1"/></g></g>
<g stroke-width="2.4" stroke="#9fb2c2"><path d="M928.3 212 V227 M932.7 208 V227 M937.2 216 V227"/></g><path d="M922.9 220.7 L944.7 218" stroke="#6f879c" stroke-width="1.1"/>
<g stroke-width="2.6"><path d="M987.3 207 V228 M992.1 207 V228 M996.6 207 V228" stroke="#b9c7d3"/><path d="M987.3 221 V228 M992.1 215 V228 M996.6 219 V228" stroke="#6f879c"/></g><path d="M981.9 219 L1003.4 215.9" stroke="#5f7a92" stroke-width="1.1"/>
<g fill="#7d93a8"><path d="M1041 209.1 H1059.2 L1058 212.7 H1042.2 Z"/><path d="M1043 214.2 H1057.2 L1056 217.3 H1044.2 Z" fill="#a6b7c6"/><path d="M1045 218.8 H1055 L1054 221.5 H1046 Z" fill="#a6b7c6"/><rect x="1049.3" y="222.5" width="1.5" height="2.8"/></g>
<g><circle cx="933.6" cy="260.6" r="9" fill="#a6b7c6"/><path d="M933.6 260.6 V251.6 A9 9 0 0 0 926.5 266.2 Z" fill="#7890a4"/><path d="M933.6 260.6 V251.6 A9 9 0 0 1 942.6 260.6 Z" fill="#c3d0db"/><path d="M933.6 260.6 V251.6 M933.6 260.6 H942.6 M933.6 260.6 L926.5 266.2" stroke="#fff" stroke-width="0.9"/></g>
<g stroke="#b3c2cf" stroke-width="1"><path d="M985.2 253 V268 M992.1 250.3 V270.8 M998.8 253 V268"/></g><g fill="#7d93a8"><circle cx="985.2" cy="260.6" r="1.5"/><circle cx="992.1" cy="260.6" r="1.5"/><circle cx="998.8" cy="260.6" r="1.5"/></g>
<g><rect x="1038.8" y="253.8" width="24" height="3" fill="#7d93a8"/><path d="M1038.8 259.5 H1062.8 M1038.8 262.8 H1062.8 M1038.8 266 H1062.8" stroke="#b3c2cf" stroke-width="1.2"/><path d="M1044.8 256.8 V267.3 M1050.8 256.8 V267.3 M1056.8 256.8 V267.3" stroke="#c8d3dc" stroke-width="1.2"/></g>
<path d="M923 297.3 H944.7" stroke="#7d93a8" stroke-width="1.4"/>

      </g></svg>
      <div class="abs" style="left:183px;top:0;width:17px;height:196px;background:#f1f1f1"></div>
      <svg class="abs" style="left:187px;top:7px" width="9" height="5"><path d="M0 5 L4.5 0 L9 5 Z" fill="#a3a3a3"/></svg>
      <div class="abs" style="left:185px;top:18px;width:13px;height:98px;background:#c1c1c1"></div>
      <svg class="abs" style="left:187px;top:184px" width="9" height="5"><path d="M0 0 L4.5 5 L9 0 Z" fill="#505050"/></svg>
    </div>
<div class="abs" style="left:0;top:227px;width:200px;height:32px;background:#f3f4f6;border-bottom:1px solid #e3e3e3"><div class="t" style="left:10px;top:10px;font-size:12px;color:#555">General</div><svg class="abs" style="left:179px;top:9px" width="8" height="12"><path d="M2.8 1.5 L7 5.8 L2.8 10.2" fill="none" stroke="#c4c4c4" stroke-width="2.1" stroke-linecap="round" stroke-linejoin="round"/></svg></div>
    <div class="abs" style="left:0;top:259px;width:200px;height:31px;background:#f3f4f6;border-bottom:1px solid #e3e3e3"><div class="t" style="left:10px;top:10px;font-size:12px;color:#555">Styles</div><svg class="abs" style="left:179px;top:9px" width="8" height="12"><path d="M2.8 1.5 L7 5.8 L2.8 10.2" fill="none" stroke="#c4c4c4" stroke-width="2.1" stroke-linecap="round" stroke-linejoin="round"/></svg></div>
    <div class="abs" style="left:0;top:290px;width:200px;height:31px;background:#f3f4f6;border-bottom:1px solid #e3e3e3"><div class="t" style="left:10px;top:10px;font-size:12px;color:#555">Sorting</div><svg class="abs" style="left:179px;top:9px" width="8" height="12"><path d="M2.8 1.5 L7 5.8 L2.8 10.2" fill="none" stroke="#c4c4c4" stroke-width="2.1" stroke-linecap="round" stroke-linejoin="round"/></svg></div>
    <div class="abs" style="left:0;top:321px;width:200px;height:31px;background:#f3f4f6;border-bottom:1px solid #e3e3e3"><div class="t" style="left:10px;top:10px;font-size:12px;color:#555">Layers</div><svg class="abs" style="left:179px;top:9px" width="8" height="12"><path d="M2.8 1.5 L7 5.8 L2.8 10.2" fill="none" stroke="#c4c4c4" stroke-width="2.1" stroke-linecap="round" stroke-linejoin="round"/></svg></div>
    <div class="abs" style="left:0;top:352px;width:200px;height:32px;background:#f3f4f6;border-bottom:1px solid #e3e3e3"><div class="t" style="left:10px;top:10px;font-size:12px;color:#555">Format</div><svg class="abs" style="left:176px;top:11px" width="13" height="8"><path d="M2.2 1.8 L7 5.8 L12 1.8" fill="none" stroke="#c4c4c4" stroke-width="2" stroke-linecap="round" stroke-linejoin="round"/></svg></div>
    <div class="abs" style="left:0;top:384px;width:200px;height:35px;background:#fff;border-bottom:1px solid #e8e8e8">
      <div class="t" style="left:15px;top:10px;font-size:13px;color:#4a4a4a">Small Multiples</div>
      <svg class="abs" style="left:176px;top:9px" width="8" height="12"><path d="M1.6 1.6 L6.2 5.3 L1.6 9.9" fill="none" stroke="#2d6bc6" stroke-width="1.9" stroke-linecap="round" stroke-linejoin="round"/></svg>
    </div>
    <div class="abs" style="left:0;top:418px;width:200px;height:34px;background:#fdfdfd"></div>
    <div class="abs" style="left:0;top:452px;width:200px;height:33px;background:#f3f4f6;border-bottom:1px solid #e3e3e3">
      <div class="t" style="left:10px;top:11px;font-size:12px;color:#555">Filters</div>
      <svg class="abs" style="left:179px;top:9px" width="8" height="12"><path d="M2.8 1.5 L7 5.8 L2.8 10.2" fill="none" stroke="#c4c4c4" stroke-width="2.1" stroke-linecap="round" stroke-linejoin="round"/></svg>
    </div>
  </div>
  <div class="abs" style="left:0;top:49px;width:1079px;height:1px;background:#e5e5e5"></div>
</div>
<div class="abs" style="left:894.5px;top:488.5px;width:211.5px;height:38.5px;border:4px solid #ef3e42;box-shadow:3px 4px 5px rgba(0,0,0,0.35);background:#fdfdfd">
  <div class="t" style="left:12.5px;top:6.6px;font-size:13px;color:#444;letter-spacing:0.15px">Conditional Formatti…</div>
  <svg class="abs" style="left:146px;top:7px" width="14" height="14"><circle cx="7" cy="7" r="6.6" fill="#1f3d66"/><text x="7" y="10.8" text-anchor="middle" font-size="10" font-weight="bold" fill="#fff" font-family="Liberation Sans">?</text></svg>
  <svg class="abs" style="left:181.5px;top:7px" width="8" height="12"><path d="M1.4 1.1 L6.4 4.8 L1.4 9.4" fill="none" stroke="#2d6bc6" stroke-width="1.9" stroke-linecap="round" stroke-linejoin="round"/></svg>
</div>
</body></html>
